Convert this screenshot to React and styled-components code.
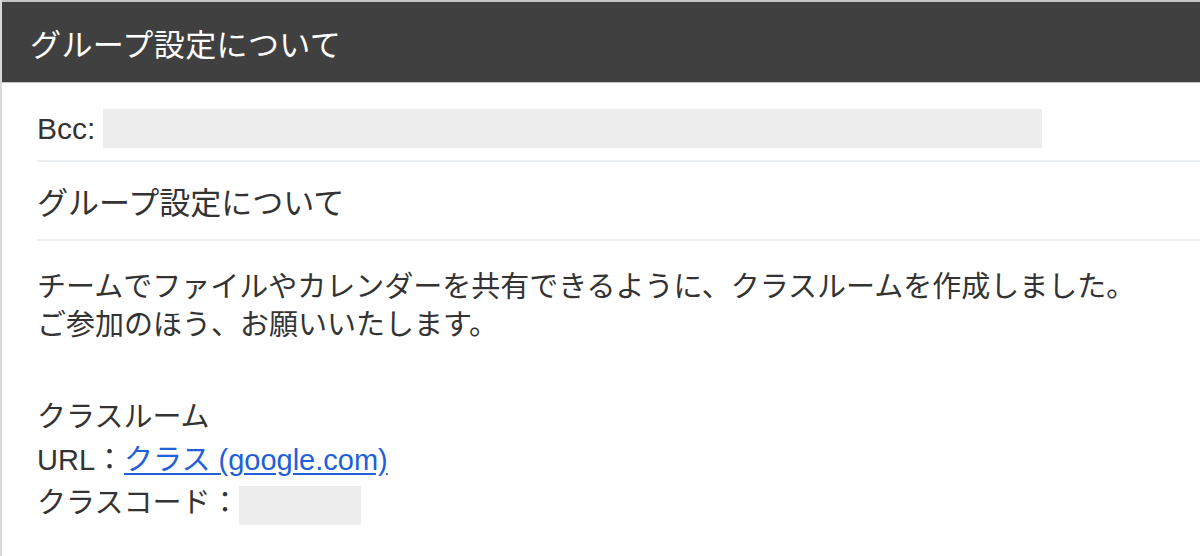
import React from 'react'
import styled, { createGlobalStyle } from 'styled-components'

const GlobalStyle = createGlobalStyle`
  body {
    margin: 0;
    background: #fff;
    font-family: "Liberation Sans", "Noto Sans CJK JP", sans-serif;
    color: #333;
  }
`

const Page = styled.div`
  min-height: 556px;
  border-left: 2px solid #d9d9d9;
  box-sizing: border-box;
`

const Header = styled.header`
  display: flex;
  align-items: center;
  height: 80px;
  padding-left: 28px;
  background: #404040;
  border-top: 2px solid #c4c4c4;
  border-bottom: 1px solid #c4c4c4;
  color: #fff;
  font-size: 31px;
  letter-spacing: 0.4px;
`

const Mail = styled.div`
  padding-left: 35px;
`

const Row = styled.div`
  display: flex;
  align-items: ${(p) => (p.top ? 'flex-start' : 'center')};
  gap: 8px;
  height: 79px;
  padding-top: ${(p) => (p.top ? '26px' : '0')};
  box-sizing: border-box;
  border-bottom: 2px solid #edf0f3;
  font-size: ${(p) => p.size || 29}px;
`

const Label = styled.span`
  line-height: 39px;
  font-size: 30px;
`

const Masked = styled.span`
  display: inline-block;
  width: ${(p) => p.w}px;
  height: 39px;
  background: #ededed;
  vertical-align: middle;
`

const Body = styled.div`
  padding-top: 27px;
  font-size: 29px;
`

const Para = styled.p`
  margin: 0 0 ${(p) => p.gap || 0}px;
  line-height: ${(p) => p.lh}px;
`

const Link = styled.a`
  color: #2160d8;
  text-decoration: underline;
  text-underline-offset: 3px;
`

export default function App() {
  return (
    <>
      <GlobalStyle />
      <Page>
        <Header>グループ設定について</Header>
        <Mail>
          <Row top>
            <Label>Bcc:</Label>
            <Masked w={939} />
          </Row>
          <Row size={31}>グループ設定について</Row>
          <Body>
            <Para lh={38} gap={52}>
              チームでファイルやカレンダーを共有できるように、クラスルームを作成しました。
              <br />
              ご参加のほう、お願いいたします。
            </Para>
            <Para lh={43}>
              クラスルーム
              <br />
              URL：<Link href="#">クラス (google.com)</Link>
              <br />
              クラスコード：<Masked w={122} />
            </Para>
          </Body>
        </Mail>
      </Page>
    </>
  )
}
